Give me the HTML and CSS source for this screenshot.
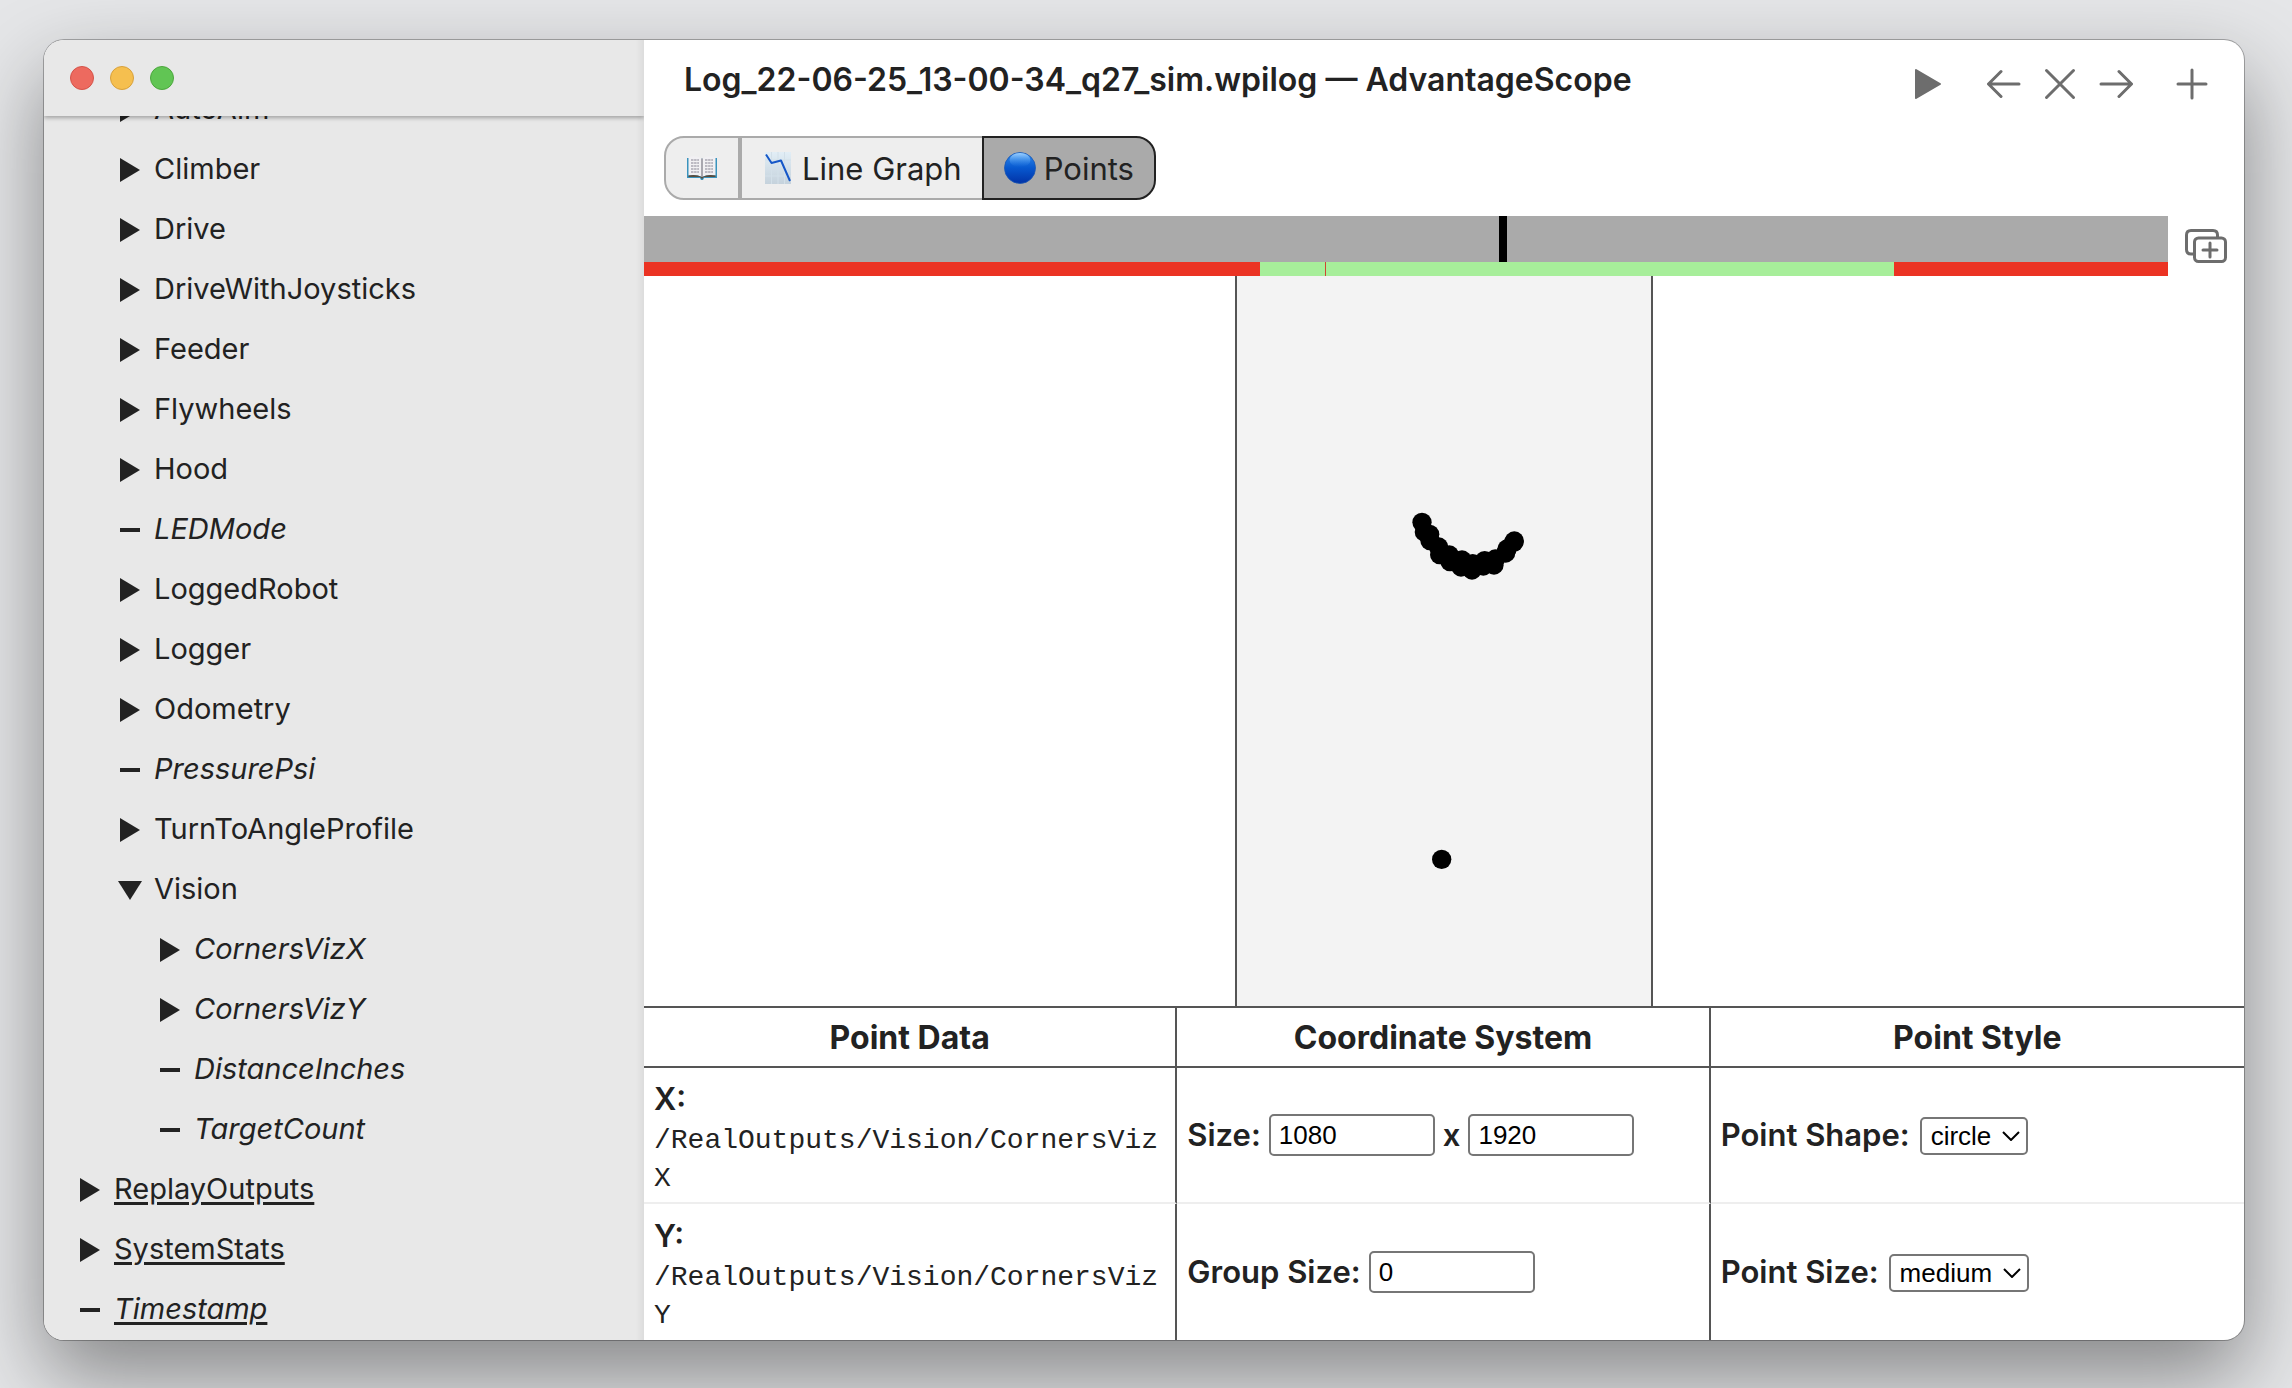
FILE: index.html
```html
<!DOCTYPE html>
<html lang="en">
<head>
<meta charset="utf-8">
<title>Log_22-06-25_13-00-34_q27_sim.wpilog — AdvantageScope</title>
<link rel="stylesheet" href="styles.css">
</head>
<body>
<svg class="defs" aria-hidden="true">
  <symbol id="closed" viewBox="0 0 24 24"><path d="M2 0L22 12L2 24Z" fill="currentColor"/></symbol>
  <symbol id="open" viewBox="0 0 24 24"><path d="M0 3H24L12 22Z" fill="currentColor"/></symbol>
  <symbol id="leaf" viewBox="0 0 24 24"><path d="M2 10H22V14H2Z" fill="currentColor"/></symbol>
</svg>
<div class="window">
  <aside class="sidebar">
    <div class="controls">
      <button class="light close" aria-label="Close"></button>
      <button class="light minimize" aria-label="Minimize"></button>
      <button class="light maximize" aria-label="Maximize"></button>
    </div>
    <ul class="tree">
      <li class="field level-2"><svg class="marker"><use href="#closed"/></svg><span>AutoAim</span></li>
      <li class="field level-2"><svg class="marker"><use href="#closed"/></svg><span>Climber</span></li>
      <li class="field level-2"><svg class="marker"><use href="#closed"/></svg><span>Drive</span></li>
      <li class="field level-2"><svg class="marker"><use href="#closed"/></svg><span>DriveWithJoysticks</span></li>
      <li class="field level-2"><svg class="marker"><use href="#closed"/></svg><span>Feeder</span></li>
      <li class="field level-2"><svg class="marker"><use href="#closed"/></svg><span>Flywheels</span></li>
      <li class="field level-2"><svg class="marker"><use href="#closed"/></svg><span>Hood</span></li>
      <li class="field level-2 value"><svg class="marker"><use href="#leaf"/></svg><span>LEDMode</span></li>
      <li class="field level-2"><svg class="marker"><use href="#closed"/></svg><span>LoggedRobot</span></li>
      <li class="field level-2"><svg class="marker"><use href="#closed"/></svg><span>Logger</span></li>
      <li class="field level-2"><svg class="marker"><use href="#closed"/></svg><span>Odometry</span></li>
      <li class="field level-2 value"><svg class="marker"><use href="#leaf"/></svg><span>PressurePsi</span></li>
      <li class="field level-2"><svg class="marker"><use href="#closed"/></svg><span>TurnToAngleProfile</span></li>
      <li class="field level-2"><svg class="marker"><use href="#open"/></svg><span>Vision</span></li>
      <li class="field level-3 value"><svg class="marker"><use href="#closed"/></svg><span>CornersVizX</span></li>
      <li class="field level-3 value"><svg class="marker"><use href="#closed"/></svg><span>CornersVizY</span></li>
      <li class="field level-3 value"><svg class="marker"><use href="#leaf"/></svg><span>DistanceInches</span></li>
      <li class="field level-3 value"><svg class="marker"><use href="#leaf"/></svg><span>TargetCount</span></li>
      <li class="field level-1 root"><svg class="marker"><use href="#closed"/></svg><span>ReplayOutputs</span></li>
      <li class="field level-1 root"><svg class="marker"><use href="#closed"/></svg><span>SystemStats</span></li>
      <li class="field level-1 root value"><svg class="marker"><use href="#leaf"/></svg><span>Timestamp</span></li>
    </ul>
  </aside>
  <main class="main">
    <header class="titlebar">
      <h1 class="title">Log_22-06-25_13-00-34_q27_sim.wpilog — AdvantageScope</h1>
      <div class="tools">
        <button class="tool play" aria-label="Play"><svg viewBox="0 0 34 34"><path d="M6 3L30 17L6 31Z" fill="currentColor" stroke="currentColor" stroke-width="2" stroke-linejoin="round"/></svg></button>
        <button class="tool" aria-label="Move tab left"><svg viewBox="0 0 34 34"><path d="M32 17H2M14 4.500L1.500 17L14 29.500"/></svg></button>
        <button class="tool" aria-label="Close tab"><svg viewBox="0 0 34 34"><path d="M3.500 3.500L30.500 30.500M30.500 3.500L3.500 30.500"/></svg></button>
        <button class="tool" aria-label="Move tab right"><svg viewBox="0 0 34 34"><path d="M2 17H32M20 4.500L32.500 17L20 29.500"/></svg></button>
        <button class="tool add" aria-label="Add tab"><svg viewBox="0 0 34 34"><path d="M3 17H31M17 3V31"/></svg></button>
      </div>
    </header>
    <nav class="tabs">
      <button class="tab book" aria-label="Documentation">
        <svg class="emoji" viewBox="0 0 32 32">
          <path d="M1 6H15L16 7L17 6H31V26H18L17 28H15L14 26H1Z" fill="#3a93bd"/>
          <path d="M2.500 5Q10 3 16 6.500Q22 3 29.500 5V23.500Q22 22 16 25Q10 22 2.500 23.500Z" fill="#f1f0f3"/>
          <path d="M2.500 23.500Q10 22 16 25Q22 22 29.500 23.500V25H18L16 27L14 25H2.500Z" fill="#5b4c3c"/>
          <path d="M16 6.500V25" stroke="#8f8f98" stroke-width="1.500"/>
          <path d="M5 8H13M5 11H13M5 14H13M5 17H13M5 20H13M19 8H27M19 11H27M19 14H27M19 17H27M19 20H27" stroke="#a9a7b2" stroke-width="1.500" stroke-dasharray="2.500 .6"/>
        </svg>
      </button>
      <button class="tab graph">
        <svg class="emoji" viewBox="0 0 32 32">
          <defs><linearGradient id="sheet" x1="0" y1="0" x2="0" y2="1"><stop offset="0" stop-color="#e2eef6"/><stop offset="1" stop-color="#c5d2dc"/></linearGradient></defs>
          <rect x="3" width="26" height="32" fill="url(#sheet)"/>
          <path d="M3 8H29M3 16H29M3 24H29M9.500 0V32M16 0V32M22.500 0V32" stroke="#d3e0e9" stroke-width="1"/>
          <path d="M4 2.500L9.500 11L19 8.500L28 29" fill="none" stroke="#1557c8" stroke-width="2" stroke-linejoin="round"/>
        </svg>
        <span>Line Graph</span>
      </button>
      <button class="tab points active">
        <svg class="emoji" viewBox="0 0 32 32">
          <defs>
            <linearGradient id="ball" x1="0" y1="0" x2="0" y2="1"><stop offset="0" stop-color="#2f8bec"/><stop offset=".5" stop-color="#0758cf"/><stop offset="1" stop-color="#0232a6"/></linearGradient>
            <linearGradient id="shine" x1="0" y1="0" x2="0" y2="1"><stop offset="0" stop-color="#9dd0ff"/><stop offset="1" stop-color="#2f86ea" stop-opacity="0"/></linearGradient>
          </defs>
          <circle cx="16" cy="16" r="15.500" fill="url(#ball)" stroke="#1c58b4" stroke-width=".8"/>
          <ellipse cx="16" cy="8" rx="10.500" ry="7" fill="url(#shine)"/>
        </svg>
        <span>Points</span>
      </button>
    </nav>
    <div class="timebar">
      <div class="timeline">
        <svg class="track" viewBox="0 0 1524 60" preserveAspectRatio="none" shape-rendering="crispEdges" role="img" aria-label="Timeline">
          <rect width="1524" height="46" fill="#aaaaaa"/>
          <rect y="46" width="1524" height="14" fill="#eb3323"/>
          <rect x="616" y="46" width="634" height="14" fill="#a7ee9a"/>
          <rect x="681" y="46" width="1" height="14" fill="#cf4632"/>
          <rect x="855" width="8" height="46" fill="#000"/>
        </svg>
      </div>
      <button class="popout" aria-label="Open in new window">
        <svg viewBox="0 0 42 34"><path d="M9 25H6Q1.500 25 1.500 20.500V6Q1.500 1.500 6 1.500H28Q32.500 1.500 32.500 6V8"/><rect x="9.500" y="9" width="31" height="23.500" rx="4"/><path d="M18 21H32M25 14V28"/></svg>
      </button>
    </div>
    <section class="viewer">
      <div class="plot">
        <svg class="dots" viewBox="0 0 1242 2190" role="img" aria-label="Vision corner points">
          <circle cx="555" cy="739" r="29"/><circle cx="562" cy="768" r="29"/><circle cx="578" cy="775" r="29"/>
          <circle cx="579" cy="794" r="29"/><circle cx="605" cy="813" r="29"/><circle cx="608" cy="836" r="29"/>
          <circle cx="637" cy="837" r="29"/><circle cx="639" cy="857" r="29"/><circle cx="675" cy="852" r="29"/>
          <circle cx="672" cy="873" r="29"/><circle cx="707" cy="863" r="29"/><circle cx="705" cy="882" r="29"/>
          <circle cx="743" cy="854" r="29"/><circle cx="739" cy="870" r="29"/><circle cx="775" cy="849" r="29"/>
          <circle cx="771" cy="867" r="29"/><circle cx="810" cy="819" r="29"/><circle cx="806" cy="831" r="29"/>
          <circle cx="832" cy="795" r="29"/><circle cx="830" cy="799" r="29"/>
          <circle cx="614" cy="1750" r="29"/>
        </svg>
      </div>
    </section>
    <table class="options">
      <thead>
        <tr><th>Point Data</th><th>Coordinate System</th><th>Point Style</th></tr>
      </thead>
      <tbody>
        <tr>
          <td><b>X:</b><code>/RealOutputs/Vision/CornersVizX</code></td>
          <td><div class="line"><label for="width">Size:</label><input id="width" type="text" value="1080"><label for="height">x</label><input id="height" type="text" value="1920"></div></td>
          <td><div class="line"><label for="shape">Point Shape:</label><span class="picker"><select id="shape"><option>circle</option></select><svg class="chevron" viewBox="0 0 18 10"><path d="M1 1L9 9L17 1"/></svg></span></div></td>
        </tr>
        <tr>
          <td><b>Y:</b><code>/RealOutputs/Vision/CornersVizY</code></td>
          <td><div class="line"><label for="group">Group Size:</label><input id="group" type="text" value="0"></div></td>
          <td><div class="line"><label for="size">Point Size:</label><span class="picker"><select id="size"><option>medium</option></select><svg class="chevron" viewBox="0 0 18 10"><path d="M1 1L9 9L17 1"/></svg></span></div></td>
        </tr>
      </tbody>
    </table>
  </main>
</div>
</body>
</html>
```
FILE: styles.css
```css
* { box-sizing: border-box; }

body {
  margin: 0;
  height: 100vh;
  padding: 40px 48px 48px 44px;
  display: flex;
  overflow: hidden;
  background: #e5e6e8;
  color: #222;
  font-family: Inter, "Liberation Sans", sans-serif;
  font-size: 31px;
}

button { font: inherit; color: inherit; padding: 0; border: 0; background: none; }
.defs { position: absolute; width: 0; height: 0; }

.window {
  flex: 1;
  min-width: 0;
  display: flex;
  overflow: hidden;
  border-radius: 20px;
  background: #fff;
  box-shadow: 0 0 0 1px rgba(0, 0, 0, .28), 0 36px 84px rgba(0, 0, 0, .42);
}

/* Sidebar */
.sidebar {
  flex: 0 0 600px;
  display: flex;
  flex-direction: column;
  background: linear-gradient(to left, #dcdcdc, #e8e8e8 8px);
}
.controls {
  flex: 0 0 76px;
  display: flex;
  align-items: center;
  gap: 16px;
  padding: 0 26px;
  box-shadow: 0 2px 4px rgba(0, 0, 0, .3);
  clip-path: inset(0 0 -8px 0);
}
.light { width: 24px; height: 24px; border: 1px solid; border-radius: 50%; }
.close { background: #ed6a5f; border-color: #d55349; }
.minimize { background: #f5bf4f; border-color: #d8a13c; }
.maximize { background: #61c554; border-color: #4ca73d; }

.tree {
  flex: 1;
  min-height: 0;
  margin: 0;
  padding: 0;
  overflow: hidden;
  list-style: none;
  display: flex;
  flex-direction: column;
  justify-content: flex-end;
  font-size: 29px;
}
.field { flex: 0 0 60px; display: flex; align-items: center; gap: 12px; line-height: 56px; }
.field span { padding-bottom: 2px; }
.level-1 { padding-left: 34px; }
.level-2 { padding-left: 74px; }
.level-3 { padding-left: 114px; }
.value { font-style: italic; }
.root { text-decoration: underline; text-decoration-thickness: 3px; text-underline-offset: 3px; }
.marker { width: 24px; height: 24px; }

/* Title bar */
.main { flex: 1; min-width: 0; display: flex; flex-direction: column; }
.titlebar {
  flex: 0 0 88px;
  display: flex;
  align-items: center;
  justify-content: space-between;
  padding: 0 35px 0 40px;
}
.title { margin: 0; padding-bottom: 8px; font-size: 32px; font-weight: 600; line-height: 40px; white-space: nowrap; }
.tools { display: flex; gap: 22px; color: #6d6d6d; }
.tool { width: 34px; height: 34px; }
.tool svg, .popout svg { display: block; width: 100%; fill: none; stroke: currentColor; stroke-width: 3; stroke-linecap: round; stroke-linejoin: round; }
.play { margin-right: 21px; }
.add { margin-left: 20px; }

/* Tabs */
.tabs { display: flex; padding: 8px 20px 16px; }
.tab {
  height: 64px;
  display: flex;
  align-items: center;
  gap: 8px;
  padding: 0 20px;
  border: 2px solid #aaa;
  background: #eee;
}
.tab:first-child { border-radius: 20px 0 0 20px; }
.tab:last-child { border-radius: 0 20px 20px 0; }
.tab.active { margin-left: -2px; background: #aaa; border-color: #222; }
.emoji { width: 32px; height: 32px; }

/* Timeline */
.timebar { flex: 0 0 60px; display: flex; }
.timeline { flex: 1; }
.track { display: block; width: 100%; height: 60px; }
.popout { flex: 0 0 76px; padding: 0 17px; color: #6d6d6d; }

/* Point plot */
.viewer { flex: 1; min-height: 0; display: flex; justify-content: center; }
.plot { width: 418px; border: solid #555; border-width: 0 2px; background: #f3f3f3; }
.dots { display: block; width: 100%; height: 100%; }

/* Options */
.options { width: 100%; table-layout: fixed; border-collapse: separate; border-spacing: 0; line-height: 38px; }
.options th { height: 62px; padding: 2px 0 0; border: solid #555; border-width: 2px 0; font-size: 32px; font-weight: 700; }
.options td { height: 136px; padding: 10px; word-break: break-all; }
.options tr > :not(:last-child) { border-right: 2px solid #555; }
.options tbody tr:first-child td { border-bottom: 2px solid #eee; }
.options td:first-child { padding: 12px 10px 4px; }
.options b, .options code { display: block; }
.options b { font-weight: 600; }
.options code { padding-top: 4px; font-family: "Liberation Mono", monospace; font-size: 28px; }
.line { display: flex; align-items: center; gap: 8px; font-weight: 600; white-space: nowrap; }
.line input, .line select {
  font: 26px "Liberation Sans", Arial, sans-serif;
  color: #000;
  background: #fff;
  border: 2px solid #767676;
  border-radius: 5px;
}
.line input { width: 166px; height: 42px; padding: 0 8px; }
.line select { height: 38px; padding: 0 34px 0 9px; appearance: none; }
.picker { display: grid; align-items: center; padding: 2px 0 0 2px; }
.picker > * { grid-area: 1 / 1; }
.chevron { justify-self: end; width: 18px; height: 10px; margin-right: 8px; fill: none; stroke: #000; stroke-width: 2; pointer-events: none; }
```
